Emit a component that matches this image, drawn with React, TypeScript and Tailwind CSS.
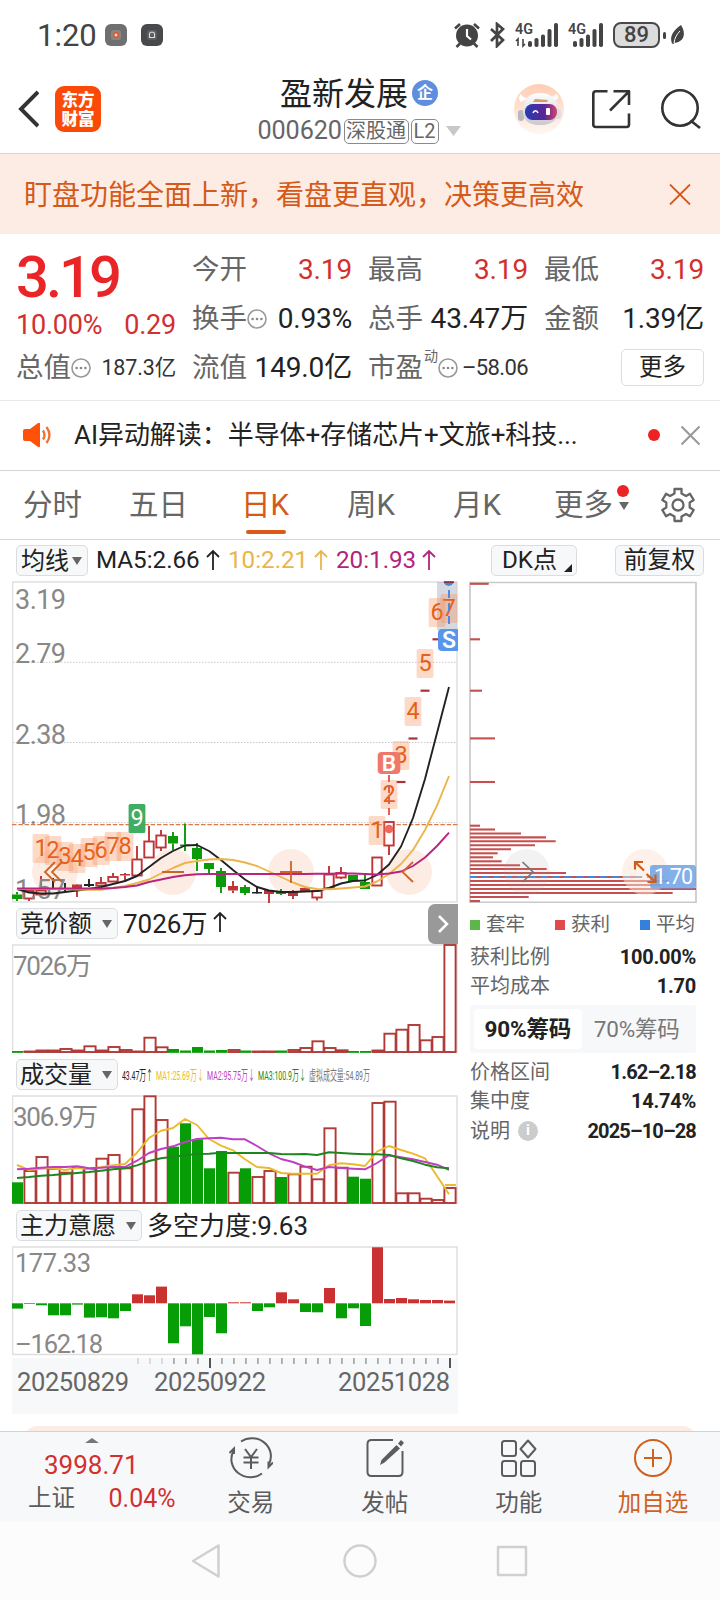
import React from "react";
import clsx from "clsx";

interface Candle {
  kind: "up" | "down" | "flat";
  top: number;
  bottom: number;
  high: number;
  low: number;
  solid?: boolean;
}

interface TagProps {
  x: number;
  y: number;
  label: string;
  green?: boolean;
}

const FONT = "font-[Roboto,'Noto_Sans_CJK_SC',sans-serif]";
const RED = "#b03a37";
const UP = "#c03438";
const GREEN = "#079d07";

// one slot per trading day, 12px apart
const slotX = (i: number) => 17 + i * 12;

const toPoints = (values: number[]) =>
  values.map((value, i) => `${slotX(i)},${value}`).join(" ");

const c = (
  kind: Candle["kind"],
  top: number,
  bottom: number,
  high: number,
  low: number,
  solid = false
): Candle => ({ kind, top, bottom, high, low, solid });

const candles: Candle[] = [
  c("down", 894.5, 899, 892, 901),
  c("up", 890.5, 899, 889, 901),
  c("up", 890, 895, 876, 895),
  c("flat", 888, 889.5, 878, 890),
  c("flat", 888, 889.5, 883, 891),
  c("up", 884.5, 889, 884, 897, true),
  c("flat", 884, 886, 879, 887),
  c("up", 882.5, 886, 877, 886),
  c("up", 876.5, 882, 873, 882),
  c("up", 874, 875.5, 873, 882, true),
  c("up", 859, 876, 846, 876),
  c("up", 841, 858, 826, 858),
  c("up", 835, 848, 830, 851),
  c("down", 836, 843.5, 832, 850),
  c("down", 844.5, 846, 823.5, 851),
  c("down", 848, 859, 843, 871),
  c("down", 863, 869, 863, 874),
  c("down", 871, 887, 868, 893),
  c("up", 886, 890.5, 881, 893, true),
  c("down", 887, 893, 885, 895),
  c("flat", 892, 893.5, 887, 894),
  c("up", 890, 894, 890, 903, true),
  c("down", 891, 894, 889, 895),
  c("up", 891, 896, 890, 899, true),
  c("up", 888, 892, 886, 892, true),
  c("up", 890.5, 898, 890, 900.5),
  c("up", 874, 889, 866, 889),
  c("up", 872.5, 878, 867, 879),
  c("down", 875, 881, 875, 881),
  c("down", 882, 889, 875, 889),
  c("up", 857, 886, 857, 886),
  c("up", 821.5, 846, 821, 855),
];

// sealed limit-up days are only a short dash
const limitUps = [782, 738.5, 690.7, 639.3];

const ma5 = [
  889, 892.5, 893.5, 893.5, 892, 890.5, 889, 887, 884, 881, 876, 867, 858, 851, 845.5, 845, 851,
  860, 870, 879.5, 887, 890.5, 892, 892, 891.5, 891, 888, 883.5, 881, 880.5, 875, 864.5, 846.5,
  818, 779, 733, 687,
];
const ma10 = [
  889, 889, 889, 889, 889, 889.5, 889.8, 889.8, 888, 886, 883, 879.5, 873.5, 868, 863, 861, 859.5,
  859, 860, 862.5, 866, 871.5, 877, 882.5, 887, 889, 889.3, 888.5, 887.5, 886.5, 881.5, 874, 864,
  850, 830, 805.7, 776,
];
const ma20 = [
  888.5, 888.5, 888.5, 888.5, 888.5, 888.5, 888.5, 888.5, 888, 887, 885.5, 882, 879.5, 877, 875.3,
  874.3, 874, 874, 874, 874, 874, 874, 874, 874, 874, 873.7, 873.7, 873.5, 873.5, 874, 874.5, 873.5,
  871.5, 866, 857.5, 846, 832.6,
];

const tags: TagProps[] = [
  { x: 41, y: 834, label: "1" },
  { x: 53, y: 836, label: "2" },
  { x: 65, y: 842, label: "3" },
  { x: 77, y: 844, label: "4" },
  { x: 89, y: 838, label: "5" },
  { x: 101, y: 836, label: "6" },
  { x: 113, y: 832, label: "7" },
  { x: 125, y: 832, label: "8" },
  { x: 137, y: 804, label: "9", green: true },
  { x: 377, y: 816, label: "1" },
  { x: 389, y: 780, label: "2" },
  { x: 401, y: 741, label: "3" },
  { x: 413, y: 697, label: "4" },
  { x: 425, y: 649, label: "5" },
  { x: 437, y: 598, label: "6" },
  { x: 449, y: 594, label: "7" },
];

const downVolumeDays = [0, 13, 14, 15, 16, 17, 19, 22, 28, 29];

const bidHeights = [
  1, 0.5, 1.5, 1.5, 3, 1.5, 5.7, 1.5, 5, 2, 0.5, 14.3, 4.7, 3, 1.5, 5, 1.5, 2, 2, 1.5, 0.5, 0.5,
  1.5, 2, 4, 10.7, 4, 1.7, 1, 1, 1.5, 18.3, 22.3, 27, 11.7, 15, 107,
];
const volumeHeights = [
  20.7, 32, 46, 34.3, 30.3, 35.3, 34, 44.3, 48, 34.7, 93.7, 106.7, 83, 56.3, 79.7, 63.7, 34.7, 52,
  30.3, 34.7, 26, 32, 26, 28.7, 36.3, 23.7, 74.7, 35.3, 26.3, 24.3, 100, 101.3, 9.7, 9.7, 4.3, 3, 15,
];
const volumeMa1 = [
  70, 75, 73.7, 73, 75, 73, 74, 72.3, 70.3, 69, 57.7, 43, 35.7, 33, 24, 30, 44, 50.7, 55.3, 64.3, 72,
  73, 78, 78.7, 78.7, 78.7, 70.3, 68.3, 69.3, 71, 56.7, 51, 55, 58.7, 63.3, 81, 99.3,
];
const volumeMa2 = [
  74.3, 73.7, 72.7, 72, 72, 71.3, 73.3, 72.7, 72, 72, 65.7, 58, 54, 51.3, 47, 44, 43.3, 42.7, 44.3,
  44.3, 51, 58.3, 64, 67, 71.7, 75, 72, 73, 73.7, 74.3, 68, 60.3, 62.3, 64.3, 67, 69.7, 75,
];
const volumeMa3 = [
  83, 82, 80.7, 80, 79, 78, 77, 75.7, 74.3, 73.3, 70.3, 66, 63.3, 61.7, 60.3, 59, 58.7, 57.7, 58, 58,
  58, 58, 59, 59.3, 59, 60, 57.3, 58, 58.7, 59.3, 59.3, 60, 63.3, 66, 69.7, 72.3, 73.3,
];
const forceValues = [
  -5.3, -0.7, -2, -12, -12, -1.3, -14.3, -14, -15, -7.7, 9, 8, 16.7, -40, -23, -51, -13.7, -30, 1, 1,
  -7.7, -4, 11, 4, -8.7, -9, 15.3, -15, -5, -22.7, 56, 4.3, 5.3, 4, 3.3, 3.3, 2.7,
];

// [y, right edge]
const chips: [number, number][] = [
  [583.8, 488.7], [639.3, 480], [690.7, 482], [738.4, 495], [782, 495], [825.7, 480], [829.5, 495],
  [833.5, 521], [837.4, 546], [841.3, 555.7], [845.3, 535], [849.3, 511], [853.3, 497.7],
  [857.3, 493], [861.3, 501.7], [865.2, 520], [869, 546.7], [873, 566], [877, 636.7], [881, 668],
  [885, 661], [889, 696], [893, 672.7], [897, 528.7], [901, 480],
];

const EllipsisIcon = () => (
  <svg className="h-5 w-5 shrink-0" viewBox="0 0 20 20" fill="none">
    <circle cx="10" cy="10" r="9" stroke="#999" strokeWidth="1.6" />
    {[5.6, 10, 14.4].map((x) => (
      <circle key={x} cx={x} cy="10" r="1.3" fill="#888" />
    ))}
  </svg>
);

const CloseIcon = ({ className, strokeWidth = 1.8 }: { className: string; strokeWidth?: number }) => (
  <svg className={className} viewBox="0 0 20 20" fill="none" stroke="currentColor" strokeWidth={strokeWidth}>
    <path d="M0.5 0.5 19.5 19.5M19.5 0.5 0.5 19.5" />
  </svg>
);

const ArrowUp = ({ className }: { className?: string }) => (
  <span className={clsx("inline-block w-[14px] text-center", className)}>
    <svg className="inline h-[22px] w-[14px] align-[-3px]" viewBox="0 0 14 22" fill="none" stroke="currentColor" strokeWidth="1.800">
      <path d="M7 21V2M1 8 7 2l6 6" />
    </svg>
  </span>
);

const Signal = ({ data }: { data?: boolean }) => (
  <svg className={data ? "h-[26px] w-[44px]" : "h-[26px] w-[36px]"} viewBox={data ? "0 0 44 26" : "8 0 36 26"} fill="#444">
    <text x={data ? 0 : 8} y="11.5" fontSize="14" fontWeight="600" textLength="18" lengthAdjust="spacingAndGlyphs">4G</text>
    {data && <path d="M1 19l2-2v7M8 17v7l2-2" fill="none" stroke="#444" strokeWidth="1.600" />}
    {[[13, 19], [19.5, 16], [26, 12.5], [32.5, 7], [39, 1]].map(([x, y]) => (
      <rect key={x} x={x} y={y} width="4" height={25 - y} rx="1.800" />
    ))}
  </svg>
);

const StatusBar = () => (
  <div className="flex h-[70px] items-center text-[#444]">
    <span className="ml-[37px] w-[58px] text-[31px] leading-none">1:20</span>
    <svg className="ml-[10px] h-[22px] w-[22px]" viewBox="0 0 22 22">
      <rect width="22" height="22" rx="6" fill="#6d6f71" />
      <rect x="6" y="6" width="10" height="10" rx="2.500" fill="#8a8583" />
      <circle cx="11" cy="11" r="3" fill="#e0562c" />
      <path d="M9.500 11h3M11 9.500v3" stroke="#fff" />
    </svg>
    <svg className="ml-[14px] h-[22px] w-[22px]" viewBox="0 0 22 22" fill="none">
      <rect width="22" height="22" rx="6" fill="#47494a" />
      <rect x="6" y="6" width="10" height="10" rx="2.500" fill="#5b5d60" />
      <path d="M8.500 9.500l1-1.200h3l1 1.200v4h-5z" stroke="#d8dde0" strokeWidth="1.100" />
    </svg>
    <svg className="ml-[291px] h-[26px] w-[26px]" viewBox="0 0 26 26" fill="none">
      <circle cx="13" cy="13.500" r="11" fill="#444" />
      <path d="M1 6.500 6 2M25 6.500 20 2M6 21.500 2.500 25M20 21.500l3.500 3.500" stroke="#444" strokeWidth="2.600" />
      <path d="M13 7v7l4 3.500" stroke="#fff" strokeWidth="2.200" />
    </svg>
    <svg className="ml-[10px] h-[26px] w-[16px]" viewBox="0 0 16 26" fill="none" stroke="#444" strokeWidth="2.700">
      <path d="M1 7l12 11-6 6V2l6 5L1 19" />
    </svg>
    <span className="ml-[9px]"><Signal data /></span>
    <span className="ml-[9px]"><Signal /></span>
    <div className="ml-[9px] flex h-[26px] w-[47px] items-center justify-center rounded-[8px] border-2 border-[#4a4a4a] bg-[#dcdcdc] text-[22px] leading-none font-medium">
      89
    </div>
    <div className="ml-[3px] h-[7px] w-[3px] rounded-sm bg-[#444]" />
    <svg className="ml-[4px] h-[20px] w-[15px]" viewBox="0 0 15 20">
      <path d="M11 0c4 6 4 13-1 16-2 1.500-4 2-5.500 1.500L3.500 19 2 18.500C-1 11 4 5 11 0Z" fill="#444" />
      <path d="M10 6C7 9 4.500 13 4 18" stroke="#fff" fill="none" />
    </svg>
  </div>
);

const RobotIcon = () => (
  <svg className="h-[50px] w-[50px]" viewBox="0 0 50 50">
    <defs>
      <linearGradient id="halo" x1="0" y1="0" x2="0" y2="1">
        <stop offset="0" stopColor="#ffcdb5" />
        <stop offset="1" stopColor="#fff7f2" />
      </linearGradient>
      <linearGradient id="head" x1="0" y1="0" x2="0" y2="1">
        <stop offset="0" stopColor="#fff" />
        <stop offset="1" stopColor="#c9c7d0" />
      </linearGradient>
      <linearGradient id="visor">
        <stop offset="0" stopColor="#273bb0" />
        <stop offset="0.6" stopColor="#5b2496" />
        <stop offset="1" stopColor="#d0456c" />
      </linearGradient>
    </defs>
    <circle cx="25" cy="25" r="25" fill="url(#halo)" />
    <path d="M7 18c-3-3-2-6 0-8 1 3 4 4 7 4zM42 16c3-2 3-4 0-6-1 2-4 3-6 3z" fill="#fff" />
    <rect x="4" y="26" width="6" height="11" rx="3" fill="#b9b7bf" />
    <rect x="41" y="25" width="6" height="10" rx="3" fill="#dedce3" />
    <path d="M9 24c1-10 8-15 17-15s17 5 18 14c1 11-4 18-18 18S8 34 9 24Z" fill="url(#head)" />
    <path d="M21 15l13 1-1 2H19z" fill="#d89a66" />
    <rect x="11" y="20" width="32" height="16" rx="7.500" fill="url(#visor)" />
    <path d="M19 29c1-3 4-3 5 0" stroke="#fff" strokeWidth="1.500" fill="none" />
    <rect x="32" y="24" width="4" height="7" rx="1" fill="#fff" />
  </svg>
);

const Header = () => (
  <header className="flex h-[84px] items-start border-b border-[#d5d5d5] pl-[18px]">
    <svg className="mt-[20px] h-[38px] w-[21px]" viewBox="0 0 21 38" fill="none" stroke="#333" strokeWidth="3.900">
      <path d="M20 2 3 19l17 17" />
    </svg>
    <div className="mt-[16px] ml-4 flex h-[46px] w-[46px] flex-col items-center justify-center rounded-[9px] bg-[#fb4a07] font-['Noto_Sans_CJK_SC',sans-serif] text-[16.500px] leading-[19px] font-black text-white">
      <span>东方</span>
      <span>财富</span>
    </div>
    <div className="ml-[156px] flex w-[204px] flex-col items-center">
      <div className="mt-[4px] flex h-[38px] items-center">
        <span className="pt-px text-[32px] leading-none text-[#222]">盈新发展</span>
        <span className="ml-[4px] flex h-[26px] w-[26px] items-center justify-center rounded-full bg-[#5f8de0] text-[16px] leading-none font-bold text-white">
          企
        </span>
      </div>
      <div className="mt-[6px] flex h-[26px] items-center whitespace-nowrap text-[#666]">
        <span className="w-[86px] text-[25.200px] leading-none tracking-[-0.100px]">000620</span>
        <span className="flex h-[25px] w-[65px] items-center justify-center rounded-[5px] border-[1.500px] border-[#8a8a8a] text-[20px] leading-none">
          深股通
        </span>
        <span className="ml-[2px] flex h-[25px] w-[28px] items-center justify-center rounded-[5px] border-[1.500px] border-[#8a8a8a] text-[20px] leading-none">
          L2
        </span>
        <svg className="ml-[7px] h-[10px] w-[15px]" viewBox="0 0 15 10">
          <path d="M0 0h15L7.500 10z" fill="#c8c8c8" />
        </svg>
      </div>
    </div>
    <div className="mt-[14px] ml-[53px]">
      <RobotIcon />
    </div>
    <svg className="mt-[19px] ml-[27px] h-[40px] w-[41px]" viewBox="0 0 41 40" fill="none" stroke="#333" strokeWidth="2.600" strokeLinejoin="round">
      <path d="M16.500 2.300H5Q2.300 2.300 2.300 5v30.500Q2.300 38 5 38h30.500q2.500 0 2.500-2.500V24.500M22.500 2.300H38V16M38 2.300 19 21.500" />
    </svg>
    <svg className="mt-[18px] ml-[28px] h-[42px] w-[42px]" viewBox="0 0 42 42" fill="none" stroke="#333" strokeWidth="2.600">
      <circle cx="20" cy="20" r="17.700" />
      <path d="M30.500 32.500 40 40" />
    </svg>
  </header>
);

interface QuoteProps {
  label: string;
  value: string;
  valueClass?: string;
  info?: boolean;
  sup?: string;
}

const Quote: React.FC<QuoteProps> = ({ label, value, valueClass = "text-[28px] text-[#222]", info, sup }) => (
  <div className="flex h-[49px] w-[160px] items-center justify-between whitespace-nowrap">
    <span className="flex items-center text-[27.500px] leading-none text-[#666]">
      {label}
      {sup && <span className="mb-[24px] ml-px text-[14px] leading-none">{sup}</span>}
      {info && <EllipsisIcon />}
    </span>
    <span className={clsx("leading-none tracking-[-0.150px]", valueClass)}>{value}</span>
  </div>
);

const QuotePanel = () => (
  <section className="flex h-[167px] gap-[16px] border-b border-[#eaeaea] pt-[11px] pl-[16px]">
    <div className="w-[160px]">
      <div className="flex h-[63px] items-center text-[58px] leading-none font-medium tracking-[-3px] text-[#ea2527]">3.19</div>
      <div className="flex h-[35px] items-center justify-between text-[27px] leading-none tracking-[-0.200px] text-[#d2302f]">
        <span>10.00%</span>
        <span>0.29</span>
      </div>
      <Quote label="总值" value="187.3亿" info valueClass="text-[21.500px] text-[#333]" />
    </div>
    <div>
      <Quote label="今开" value="3.19" valueClass="text-[28px] text-[#d2302f]" />
      <Quote label="换手" value="0.93%" info />
      <Quote label="流值" value="149.0亿" />
    </div>
    <div>
      <Quote label="最高" value="3.19" valueClass="text-[28px] text-[#d2302f]" />
      <Quote label="总手" value="43.47万" />
      <Quote label="市盈" value="–58.06" info sup="动" valueClass="text-[22px] tracking-[-0.600px] text-[#333]" />
    </div>
    <div>
      <Quote label="最低" value="3.19" valueClass="text-[28px] text-[#d2302f]" />
      <Quote label="金额" value="1.39亿" />
      <div className="flex h-[49px] items-center justify-end">
        <button className="h-[37px] w-[83px] rounded-[5px] border border-[#ddd] text-[23.500px] leading-none text-[#222]">
          更多
        </button>
      </div>
    </div>
  </section>
);

const NewsRow = () => (
  <div className="flex h-[70px] items-center border-b border-[#d5d5d5] pb-[1px] whitespace-nowrap">
    <svg className="ml-[22px] h-[26px] w-[30px]" viewBox="0 0 30 26" fill="none">
      <path d="M1 9q0-2 2-2h5l8-6q2-1 2 1v22q0 2-2 1l-8-6H3q-2 0-2-2z" fill="#ff5208" />
      <path d="M21 8.500q3 4.500 0 9M24.500 5q6 8 0 16" stroke="#f0702c" strokeWidth="2.300" />
    </svg>
    <span className="ml-[22px] w-[506px] text-[26px] leading-none tracking-[-0.050px] text-[#222]">
      AI异动解读：半导体+存储芯片+文旅+科技...
    </span>
    <span className="ml-[68px] h-3 w-3 rounded-full bg-[#ee2224]" />
    <CloseIcon className="ml-[21px] h-[19px] w-[19px] text-[#999]" strokeWidth={2.2} />
  </div>
);

const TabBar = () => (
  <nav className="flex h-[69px] items-center border-b border-[#d5d5d5] pt-[2px] text-[29.500px] leading-none whitespace-nowrap text-[#666]">
    <span className="ml-[23px] w-[59px]">分时</span>
    <span className="ml-[47px] w-[59px]">五日</span>
    <span className="relative ml-[53px] w-[48px] text-[#d55a1a]">
      日K
      <i className="absolute top-[39px] left-[5px] h-1 w-10 rounded-full bg-[#dc5a18]" />
    </span>
    <span className="ml-[58px] w-[48px]">周K</span>
    <span className="ml-[58px] w-[48px]">月K</span>
    <span className="ml-[53px] w-[60px]">更多</span>
    <span className="relative ml-[5px] h-[8px] w-[10px]">
      <svg className="h-[8px] w-[10px]" viewBox="0 0 10 8">
        <path d="M0 0h10L5 8z" fill="#666" />
      </svg>
      <i className="absolute -top-[17px] -left-[2px] h-3 w-3 rounded-full bg-[#ee2224]" />
    </span>
    <svg className="mb-[2px] ml-[31px] h-[36px] w-[36px]" viewBox="0 0 36 36" fill="none" stroke="#666" strokeWidth="2.300" strokeLinejoin="round">
      <path d="M14.500 2h7v4.500l4.500 2.600 4-2.300 3.700 6.200-4 2.400v5.200l4 2.400-3.700 6.200-4-2.300-4.500 2.600V34h-7v-4.500L10 26.900l-4 2.300L2.300 23l4-2.400v-5.200l-4-2.400L6 6.800l4 2.300 4.500-2.600z" />
      <circle cx="18" cy="18" r="5.500" />
    </svg>
  </nav>
);

const Dropdown = ({ label, className }: { label: string; className?: string }) => (
  <button
    className={clsx(
      "flex h-[31px] shrink-0 items-center justify-between rounded-[5px] border border-[#dadde0] bg-[#f7f8fa] pr-[5px] text-[24px] leading-none whitespace-nowrap text-[#222]",
      className
    )}
  >
    {label}
    <svg className="h-[8px] w-[10px]" viewBox="0 0 10 8">
      <path d="M0 0h10L5 8z" fill="#666" />
    </svg>
  </button>
);

const AverageBar = () => (
  <div className="flex h-[41px] items-center pl-[16px] text-[24.200px] leading-none whitespace-nowrap">
    <Dropdown label="均线" className="w-[72px] pl-[4px]" />
    <span className="ml-[8px] w-[110px] text-[#222]">MA5:2.66</span>
    <ArrowUp className="text-[#222]" />
    <span className="ml-[8px] w-[86px] text-[#e8b64a]">10:2.21</span>
    <ArrowUp className="text-[#e8b64a]" />
    <span className="ml-[8px] w-[86px] text-[#b3247f]">20:1.93</span>
    <ArrowUp className="text-[#b3247f]" />
    <button className="relative ml-[55px] h-[31px] w-[86px] rounded-[5px] border border-[#dadde0] bg-[#f7f8fa] pr-[9px] text-[#222]">
      DK点
      <svg className="absolute right-[4px] bottom-[3px] h-[8px] w-[8px]" viewBox="0 0 8 8">
        <path d="M8 0v8H0z" fill="#222" />
      </svg>
    </button>
    <button className="ml-[38px] h-[31px] w-[89px] rounded-[5px] border border-[#dadde0] bg-[#f7f8fa] text-[23.800px] text-[#222]">
      前复权
    </button>
  </div>
);

const Tag: React.FC<TagProps> = ({ x, y, label, green }) => (
  <g>
    <rect x={x - 8.4} y={y} width="16.800" height="29" rx="1.500" fill={green ? "#41ad62" : "#fa8c55"} fillOpacity={green ? 1 : 0.33} />
    <text x={x} y={y + 22} fontSize="23.500" textAnchor="middle" fill={green ? "#fff" : "#e66018"}>
      {label}
    </text>
  </g>
);

const KLineChart = () => (
  <svg className="block h-[322px] w-[446px]" viewBox="12 581 446 322" fill="none">
    <rect x="12.500" y="582" width="444.500" height="320" stroke="#dfdfdf" strokeWidth="1.500" />
    {[662.3, 742.5, 822.6].map((y) => (
      <path key={y} d={`M13 ${y}H457`} stroke="#c8c8c8" strokeDasharray="1.500 1.500" />
    ))}
    <g fill="#fde9de" fillOpacity="0.850">
      <circle cx="55" cy="872" r="23" />
      <circle cx="173" cy="872" r="23" />
      <circle cx="291" cy="872" r="23" />
      <circle cx="409" cy="872" r="23" />
    </g>
    <path d="M12 824.700H458" stroke="#dd7a4a" strokeWidth="1.300" strokeDasharray="4.500 1.800" />
    {candles.map((candle, i) => {
      const x = slotX(i);
      const color = candle.kind === "up" ? UP : candle.kind === "down" ? "#0a9a0a" : "#222";
      const hollow = candle.kind === "up" && !candle.solid;
      return (
        <g key={i} stroke={color} strokeWidth="1.900">
          {candle.high < candle.top && <path d={`M${x} ${candle.high}V${candle.top}`} />}
          {candle.low > candle.bottom && <path d={`M${x} ${candle.bottom}V${candle.low}`} />}
          {hollow ? (
            <rect x={x - 4.7} y={candle.top + 0.5} width="9.400" height={candle.bottom - candle.top - 1} fill="#fff" />
          ) : (
            <rect x={x - 5} y={candle.top} width="10" height={candle.bottom - candle.top} fill={color} stroke="none" />
          )}
        </g>
      );
    })}
    {[
      { y: 608.5, label: "3.19" },
      { y: 662.5, label: "2.79" },
      { y: 743.5, label: "2.38" },
      { y: 823.5, label: "1.98" },
      { y: 899, label: "1.57" },
    ].map(({ y, label }) => (
      <text key={label} x="15" y={y} fontSize="27" textLength="51" fill="#888">
        {label}
      </text>
    ))}
    {limitUps.map((y, i) => (
      <path key={y} d={`M${slotX(32 + i) - 4.5} ${y}h9`} stroke="#a83238" strokeWidth="2.200" />
    ))}
    <rect x="437" y="582" width="19.700" height="48" fill="#8a94a5" fillOpacity="0.350" />
    {tags.map((tag, i) => (
      <Tag key={i} {...tag} />
    ))}
    <polyline points={toPoints(ma5)} stroke="#222" strokeWidth="1.900" strokeLinejoin="round" />
    <polyline points={toPoints(ma10)} stroke="#ecb54c" strokeWidth="1.900" strokeLinejoin="round" />
    <polyline points={toPoints(ma20)} stroke="#b8247f" strokeWidth="1.900" strokeLinejoin="round" />
    <path d="M389 775V815" stroke="#e05a50" strokeWidth="1.900" strokeDasharray="7 4" />
    <circle cx="389" cy="829" r="4.300" fill="#f4685c" />
    <rect x="377.700" y="752" width="22.600" height="22" rx="4" fill="#f0786a" />
    <text x="389" y="771" fontSize="22.500" fontWeight="600" textAnchor="middle" fill="#fff">B</text>
    <path d="M449 590V628" stroke="#4a86e0" strokeWidth="1.900" strokeDasharray="8 5" />
    <circle cx="448.700" cy="581" r="5" fill="#4a86e0" />
    <path d="M444 582.300h10" stroke="#7d3550" strokeWidth="1.500" />
    <rect x="438" y="629" width="22" height="22" rx="4" fill="#5796ea" />
    <text x="449" y="648" fontSize="23" fontWeight="600" textAnchor="middle" fill="#fff">S</text>
    <g stroke="#cd6428" strokeWidth="1.800">
      <path d="M55 862 45 872l10 10M62 862 52 872l10 10" />
      <path d="M162 872h22M280 872h22M291 861v22" />
      <path d="M413 862 402.500 872l10.500 10" />
    </g>
  </svg>
);

const OutlinedBars = ({ heights }: { heights: number[] }) => (
  <>
    {heights.map((height, i) => {
      const down = downVolumeDays.includes(i);
      return down ? (
        <rect key={i} x={slotX(i) - 5} y={108 - height} width="11" height={height + 0.8} fill={GREEN} />
      ) : (
        <rect key={i} x={slotX(i) - 4.6} y={108 - height} width="11.200" height={height} fill="#fff" stroke={RED} strokeWidth="1.900" />
      );
    })}
  </>
);

const Frame = () => <rect x="12.500" y="1" width="444.500" height="107.500" stroke="#dfdfdf" strokeWidth="1.500" />;

const BidChart = () => (
  <svg className="block h-[109px] w-[446px]" viewBox="12 0 446 109" fill="none">
    <Frame />
    <text x="13" y="30.500" fontSize="26" textLength="79" fill="#888">7026万</text>
    <OutlinedBars heights={bidHeights} />
  </svg>
);

const VolumeChart = () => (
  <svg className="block h-[109px] w-[446px]" viewBox="12 0 446 109" fill="none">
    <Frame />
    <text x="13" y="30.500" fontSize="26" textLength="85" fill="#888">306.9万</text>
    <OutlinedBars heights={volumeHeights} />
    <g strokeWidth="1.900" strokeLinejoin="round">
      <polyline points={toPoints(volumeMa1)} stroke="#eab92c" />
      <path d="M445 90h11" stroke="#eab92c" />
      <polyline points={toPoints(volumeMa2)} stroke="#bf3fc4" />
      <polyline points={toPoints(volumeMa3)} stroke="#1d871d" />
    </g>
  </svg>
);

const ForceChart = () => (
  <svg className="block h-[110px] w-[446px]" viewBox="12 0 446 110" fill="none">
    <Frame />
    {forceValues.map((value, i) => (
      <rect
        key={i}
        x={slotX(i) - 5}
        y={value > 0 ? 57.3 - value : 57.3}
        width="11"
        height={Math.abs(value)}
        fill={value > 0 ? "#c93230" : GREEN}
      />
    ))}
    <text x="15" y="25.500" fontSize="25.500" textLength="76" fill="#888">177.33</text>
    <text x="15" y="107" fontSize="25.500" textLength="88" fill="#888">–162.18</text>
  </svg>
);

const dateTicks = Array.from({ length: 27 }, (_, i) => 138 + i * 12);

const DateAxis = () => (
  <svg className="mt-[2px] block h-[56px] w-[446px] bg-[#f7f8fa]" viewBox="12 0 446 56" fill="#666">
    {dateTicks.map((x, i) => {
      const major = x === 210 || x === 450;
      return (
        <rect key={x} x={x - 1} y="0" width={major ? 2 : 1.8} height={major ? 10 : 6} fill={major ? "#555" : i < 3 ? "#d8d8d8" : "#aaa"} />
      );
    })}
    <g fontSize="25.500">
      <text x="17" y="32.500" textLength="112">20250829</text>
      <text x="154" y="32.500" textLength="112">20250922</text>
      <text x="338" y="32.500" textLength="112">20251028</text>
    </g>
  </svg>
);

const VolumeLegend = () => (
  <svg className="ml-[4px] h-[20px] w-[250px]" viewBox="122 0 250 20" fontSize="13.500">
    <text x="122" y="15" textLength="31" lengthAdjust="spacingAndGlyphs" fill="#222">43.47万↑</text>
    <text x="156" y="15" textLength="48" lengthAdjust="spacingAndGlyphs" fill="#eab92c">MA1:25.69万↓</text>
    <text x="207" y="15" textLength="48" lengthAdjust="spacingAndGlyphs" fill="#bf3fc4">MA2:95.75万↓</text>
    <text x="258" y="15" textLength="48" lengthAdjust="spacingAndGlyphs" fill="#1d871d">MA3:100.9万↓</text>
    <text x="309" y="15" textLength="61" lengthAdjust="spacingAndGlyphs" fill="#777">虚拟成交量:54.89万</text>
  </svg>
);

const ChartColumn = () => (
  <div className="w-[446px]">
    <KLineChart />
    <div className="flex h-[41px] items-center pl-[4px]">
      <Dropdown label="竞价额" className="w-[102px] pl-[3px]" />
      <span className="ml-[5px] w-[90px] text-[26px] leading-none whitespace-nowrap text-[#222]">7026万</span>
      <ArrowUp className="text-[#222]" />
      <button className="mt-px ml-auto flex h-[40px] w-[30px] items-center justify-center rounded-l-[7px] bg-[#999]">
        <svg className="h-[20px] w-[12px]" viewBox="0 0 12 20" fill="none" stroke="#fff" strokeWidth="2.500">
          <path d="M2 2l8 8-8 8" />
        </svg>
      </button>
    </div>
    <BidChart />
    <div className="flex h-[42px] items-center pt-px pl-[4px]">
      <Dropdown label="成交量" className="w-[102px] pl-[3px]" />
      <VolumeLegend />
    </div>
    <VolumeChart />
    <div className="flex h-[42px] items-center pt-px pl-[4px]">
      <Dropdown label="主力意愿" className="w-[126px] pl-[3px]" />
      <span className="ml-[5px] text-[26px] leading-none whitespace-nowrap text-[#222]">多空力度:9.63</span>
    </div>
    <ForceChart />
    <DateAxis />
  </div>
);

const ChipChart = () => (
  <svg className="block h-[322px] w-[228px]" viewBox="469 581 228 322" fill="none">
    <path d="M470 903V582.500H696V902.300H470" stroke="#c9c9c9" strokeWidth="1.700" />
    {chips.map(([y, right]) => (
      <path key={y} d={`M470 ${y}H${right}`} stroke="#c65050" strokeWidth="2.100" />
    ))}
    <path d="M470 877H664" stroke="#4a86d8" strokeWidth="2" strokeDasharray="7 4.800" />
    <circle cx="526.700" cy="872" r="23" fill="#999" fillOpacity="0.130" />
    <path d="M522.500 862 533 872l-10.500 10" stroke="#777" strokeWidth="1.700" />
    <circle cx="645" cy="872" r="23" fill="#fde3d5" fillOpacity="0.500" />
    <rect x="650" y="865" width="46" height="23.500" rx="3" fill="#6ea3e8" fillOpacity="0.860" />
    <path d="M644 870.500 635 862M635 869.500V862h8M646.500 874 655.500 882M655.500 874.500V882h-8" stroke="#cf5c1c" strokeWidth="2.200" />
    <text x="654" y="883.800" fontSize="21.500" textLength="39" fill="#fff">1.70</text>
  </svg>
);

interface InfoRowProps {
  label: string;
  value: string;
  info?: boolean;
  tight?: boolean;
}

const InfoRow: React.FC<InfoRowProps> = ({ label, value, info, tight }) => (
  <div className="flex h-[29.500px] items-center justify-between pr-px text-[20px] leading-none whitespace-nowrap">
    <span className="flex items-center text-[#666]">
      {label}
      {info && (
        <span className="ml-[8px] flex h-5 w-5 items-center justify-center rounded-full bg-[#ccc] text-[15px] font-bold text-white">
          i
        </span>
      )}
    </span>
    <span className={clsx("font-bold text-[#222]", tight ? "tracking-[-0.850px]" : "tracking-[-0.250px]")}>{value}</span>
  </div>
);

const chipLegend = [
  { label: "套牢", color: "bg-[#5db648]" },
  { label: "获利", color: "bg-[#e04a4a]" },
  { label: "平均", color: "bg-[#3580dd]" },
];

const ChipColumn = () => (
  <div className="ml-[11px] w-[228px]">
    <ChipChart />
    <div className="pl-px">
      <div className="flex h-[39px] items-center justify-between pt-[4px] pr-[2px] text-[19.500px] leading-none text-[#666]">
        {chipLegend.map(({ label, color }) => (
          <span key={label} className="flex items-center">
            <i className={clsx("mr-[6px] h-[10px] w-[10px]", color)} />
            {label}
          </span>
        ))}
      </div>
      <InfoRow label="获利比例" value="100.00%" />
      <InfoRow label="平均成本" value="1.70" />
      <div className="my-[4px] mr-px flex h-[48px] items-center rounded-[3px] bg-[#f7f8fa] px-[4px] text-[22.500px] leading-none tracking-[-0.200px]">
        <span className="flex h-[40px] w-[109px] items-center justify-center rounded-[4px] bg-white font-bold text-[#222]">90%筹码</span>
        <span className="flex w-[112px] justify-center text-[#777]">70%筹码</span>
      </div>
      <InfoRow label="价格区间" value="1.62–2.18" tight />
      <InfoRow label="集中度" value="14.74%" />
      <InfoRow label="说明" value="2025–10–28" info tight />
    </div>
  </div>
);

interface ActionProps {
  label: string;
  active?: boolean;
  children: React.ReactNode;
}

const Action: React.FC<ActionProps> = ({ label, active, children }) => (
  <button className={clsx("flex w-[134.400px] flex-col items-center", active ? "text-[#d0601e]" : "text-[#5c5c5c]")}>
    <svg className="mt-[5px] h-[42px] w-[44px]" viewBox="0 0 44 42" fill="none" stroke="currentColor" strokeWidth="2">
      {children}
    </svg>
    <span className="mt-[13px] text-[23.500px] leading-none">{label}</span>
  </button>
);

const BottomBar = () => (
  <footer className="flex h-[91px] border-t border-[#d0d2d4] bg-[#f7f8fa]">
    <div className="w-[184px] leading-none text-[#d2302f]">
      <svg className="mt-[6px] ml-[85px] h-[5px] w-[14px]" viewBox="0 0 14 5">
        <path d="M0 5 7 0l7 5z" fill="#777" />
      </svg>
      <div className="mt-[9px] ml-[44px] text-[26px]">3998.71</div>
      <div className="mt-[8px] ml-[28px] flex items-center justify-between pr-[8px]">
        <span className="text-[23.500px] text-[#5c5c5c]">上证</span>
        <span className="text-[25px]">0.04%</span>
      </div>
    </div>
    <Action label="交易">
      <path d="M12 4.500A19 18 0 0 1 39.500 28M33 36.500A19 18 0 0 1 4.500 14M0.500 16l4.500-4.500V17M44 25.500l-4.500 4.500v-5.500" />
      <path d="M16 12l6 8 6-8M14.500 20.500h15M14.500 25.500h15M22 20v12" />
    </Action>
    <Action label="发帖">
      <path d="M30 3H8.500Q4.500 3 4.500 7v28q0 4 4 4h27q4 0 4-4V14" />
      <path d="M17 28l1.500-5L33.500 8l3.500 3.500L21.500 25.500z" fill="currentColor" stroke="none" />
      <path d="M35 6.500 38 3l3 2.800-3 3.700z" fill="currentColor" stroke="none" />
    </Action>
    <Action label="功能">
      <rect x="5" y="4" width="14" height="15" rx="2.500" />
      <rect x="5" y="24" width="14" height="15" rx="2.500" />
      <rect x="24" y="24" width="14" height="15" rx="2.500" />
      <path d="M31 3.500 38.500 12 31 20.500 23.500 12z" strokeLinejoin="round" />
    </Action>
    <Action label="加自选" active>
      <circle cx="22" cy="21" r="18" />
      <path d="M13 21h18M22 12v18" />
    </Action>
  </footer>
);

const SystemNav = () => (
  <div className="flex h-[78px] items-center bg-[#fcfcfc]">
    <svg className="ml-[190px] h-[36px] w-[340px]" viewBox="190 0 340 36" fill="none" stroke="#d0d0d0" strokeWidth="2.500" strokeLinejoin="round">
      <path d="M218.500 2.500V33.500L193 18z" />
      <circle cx="360" cy="18" r="15.500" />
      <rect x="498" y="4" width="28" height="28" />
    </svg>
  </div>
);

const App = () => (
  <div className={clsx("flex h-[1600px] w-[720px] flex-col overflow-hidden bg-white", FONT)}>
    <StatusBar />
    <Header />
    <div className="flex h-[80px] shrink-0 items-center bg-[#fcece4] pl-[24px] text-[#d55a1a]">
      <span className="w-[645px] pt-[3px] text-[28px] leading-none whitespace-nowrap">
        盯盘功能全面上新，看盘更直观，决策更高效
      </span>
      <CloseIcon className="h-[21px] w-[22px]" />
    </div>
    <QuotePanel />
    <NewsRow />
    <TabBar />
    <AverageBar />
    <main className="flex h-[850px] flex-col overflow-hidden">
      <div className="flex pl-[12px]">
        <ChartColumn />
        <ChipColumn />
      </div>
      <div className="mx-[22px] mt-[12px] h-[40px] shrink-0 rounded-t-[16px] bg-[#fcece4]" />
    </main>
    <BottomBar />
    <SystemNav />
  </div>
);

export default App;
